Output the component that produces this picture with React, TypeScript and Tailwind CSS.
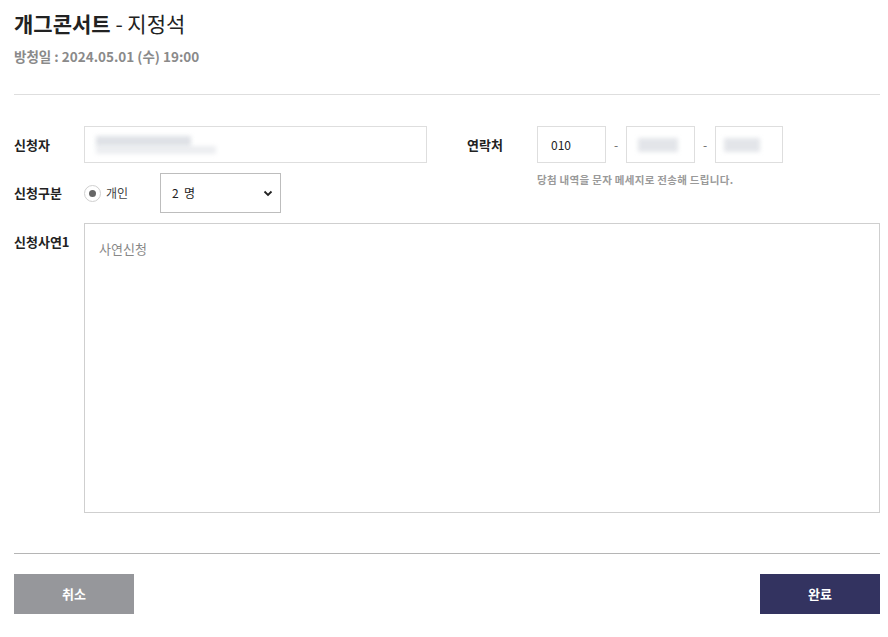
import React from 'react';

const font = { fontFamily: '"Noto Sans CJK KR", "Noto Sans", sans-serif' };

function Blurred(props: { className: string }): JSX.Element {
    return <div className={'bg-gray-300 blur-[2px] ' + props.className}></div>;
}

export default function App(): JSX.Element {
    return (
        <div style={font} className="w-[888px] h-[637px] bg-white pl-[14px] pr-[8px] pt-[9px] text-[#222]">
            <h1 className="text-[21px] leading-[28px] font-bold">
                개그콘서트 <span className="font-normal">- 지정석</span>
            </h1>
            <div className="mt-[10px] text-[13.5px] leading-[18px] font-bold text-[#8a8a8a]">
                방청일 : 2024.05.01 (수) 19:00
            </div>
            <div className="mt-[29px] border-t border-[#dedede]"></div>

            <div className="mt-[31px] flex">
                <div className="flex flex-col">
                    <div className="flex items-center h-[37px]">
                        <div className="w-[70px] text-[13px] font-bold">신청자</div>
                        <div className="w-[343px] h-[37px] border border-[#dedede] flex items-center px-[11px]">
                            <div className="flex flex-col">
                                <Blurred className="w-[95px] h-[10px] opacity-70" />
                                <Blurred className="w-[120px] h-[8px] opacity-40" />
                            </div>
                        </div>
                    </div>
                    <div className="flex items-center mt-[10px] h-[40px]">
                        <div className="w-[70px] text-[13px] font-bold">신청구분</div>
                        <label className="flex items-center w-[76px]">
                            <span className="w-[17px] h-[17px] rounded-full border border-[#cfcfcf] flex items-center justify-center">
                                <span className="w-[7px] h-[7px] rounded-full bg-[#666]"></span>
                            </span>
                            <span className="ml-[5px] text-[12px] text-[#444]">개인</span>
                        </label>
                        <div className="w-[121px] h-[40px] border border-[#bdbdbd] flex items-center justify-between pl-[11px] pr-[6px] text-[12px]">
                            <span>2&nbsp;&nbsp;명</span>
                            <svg width="12" height="12" viewBox="0 0 12 12">
                                <path d="M2.5 4.5 L6 8 L9.5 4.5" fill="none" stroke="#222" strokeWidth="1.8" />
                            </svg>
                        </div>
                    </div>
                </div>

                <div className="ml-[40px] flex flex-col">
                    <div className="flex items-center h-[37px]">
                        <div className="w-[70px] text-[13px] font-bold">연락처</div>
                        <div className="w-[69px] h-[37px] border border-[#dedede] flex items-center px-[13px] text-[12px]">010</div>
                        <div className="w-[20px] text-center text-[12px] text-[#666]">-</div>
                        <div className="w-[69px] h-[37px] border border-[#dedede] flex items-center px-[11px]">
                            <Blurred className="w-[40px] h-[14px] opacity-60" />
                        </div>
                        <div className="w-[20px] text-center text-[12px] text-[#666]">-</div>
                        <div className="w-[68px] h-[37px] border border-[#dedede] flex items-center px-[8px]">
                            <Blurred className="w-[36px] h-[14px] opacity-60" />
                        </div>
                    </div>
                    <div className="ml-[70px] mt-[9px] text-[10.5px] font-bold text-[#9a9a9a] tracking-[0.3px]">
                        당첨 내역을 문자 메세지로 전송해 드립니다.
                    </div>
                </div>
            </div>

            <div className="flex mt-[10px]">
                <div className="w-[70px] pt-[9px] text-[13px] font-bold">신청사연1</div>
                <div className="flex-1 h-[290px] border border-[#cfcfcf] px-[14px] pt-[15px] text-[13px] text-[#888]">
                    사연신청
                </div>
            </div>

            <div className="mt-[40px] border-t border-[#b5b5b5]"></div>

            <div className="mt-[20px] flex justify-between">
                <button className="w-[120px] h-[40px] bg-[#96979b] text-white text-[13px] font-bold">취소</button>
                <button className="w-[120px] h-[40px] bg-[#333360] text-white text-[13px] font-bold">완료</button>
            </div>
        </div>
    );
}
